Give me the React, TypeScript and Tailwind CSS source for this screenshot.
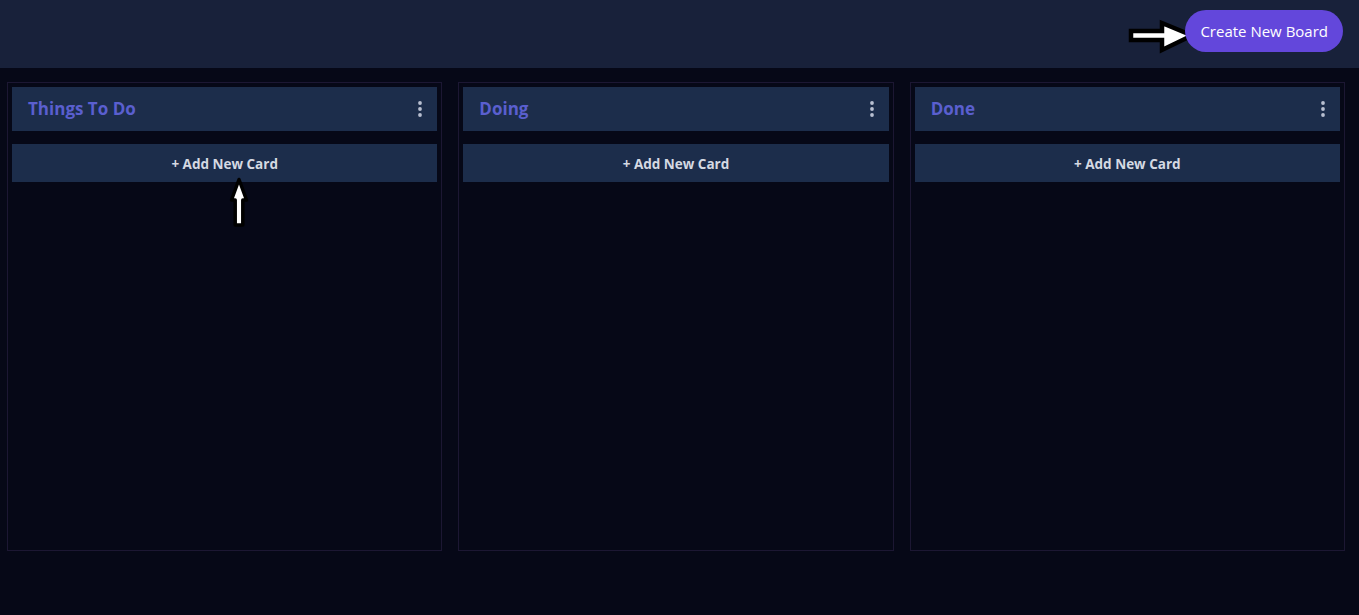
import React from "react";

const Dots = () => (
  <svg width="4" height="16" viewBox="0 0 4 16" fill="#b8bfd0">
    <circle cx="2" cy="2" r="1.9" />
    <circle cx="2" cy="8" r="1.9" />
    <circle cx="2" cy="14" r="1.9" />
  </svg>
);

const Column = ({ title, arrow }: { title: string; arrow?: boolean }) => (
  <div className="relative h-[469px] flex-1 border border-[#1c1733] bg-[#060817] px-[4px] pt-[4px]">
    <div className="flex h-[44px] items-center justify-between bg-[#1c2d4b] pl-[16px] pr-[15px]">
      <span className="text-[17px] font-bold text-[#5a5fcf]">{title}</span>
      <Dots />
    </div>
    <button className="mt-[13px] flex h-[38px] w-full items-center justify-center bg-[#1c2d4b] pt-[2px] text-[13.5px] font-bold text-[#d5d9e2]">
      + Add New Card
    </button>
    {arrow && (
      <svg className="absolute left-[218px] top-[91px]" width="26" height="56" viewBox="0 0 26 56">
        <path
          d="M13 5.5 L20.5 26 L16.8 26 L16.8 51 L9.2 51 L9.2 26 L5.5 26 Z"
          fill="#ffffff"
          stroke="#000000"
          strokeWidth="3.5"
          strokeLinejoin="round"
        />
      </svg>
    )}
  </div>
);

export default function App() {
  return (
    <div className="min-h-[615px] w-full bg-[#060817]" style={{ fontFamily: '"Open Sans", "Noto Sans", sans-serif' }}>
      <header className="relative flex h-[68px] items-start justify-end bg-[#18213a] pr-[16px] pt-[10px]">
        <svg className="absolute left-[1126px] top-[18px]" width="72" height="38" viewBox="0 0 72 38">
          <path
            d="M5 13 L36 13 L36 5 L66 17.5 L36 32 L36 22 L5 22 Z"
            fill="#ffffff"
            stroke="#000000"
            strokeWidth="4.5"
            strokeLinejoin="miter"
          />
        </svg>
        <button className="relative h-[42px] rounded-full bg-[#6347db] px-[15px] text-[15px] text-white">
          Create New Board
        </button>
      </header>
      <main className="flex gap-[16px] pl-[7px] pr-[14px] pt-[14px]">
        <Column title="Things To Do" arrow />
        <Column title="Doing" />
        <Column title="Done" />
      </main>
    </div>
  );
}
